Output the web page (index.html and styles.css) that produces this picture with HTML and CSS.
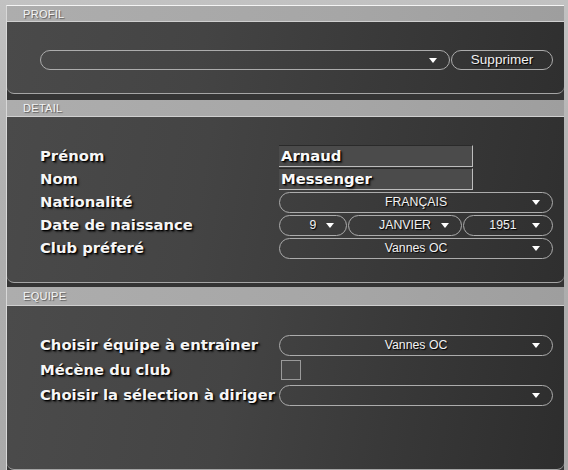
FILE: index.html
```html
<!DOCTYPE html>
<html lang="fr">
<head>
    <meta charset="UTF-8">
    <meta name="viewport" content="width=device-width, initial-scale=1.0">
    <title>Profil</title>
    <link rel="stylesheet" href="styles.css">
</head>
<body>
    <div class="screen">
        <!-- Profil -->
        <div class="section section-profil">
            <div class="section-title">PROFIL</div>
            <div class="section-body">
                <div class="profil-row">
                    <div class="select select-profil"><span class="value"></span><span class="arrow"></span></div>
                    <div class="pill-button">Supprimer</div>
                </div>
            </div>
        </div>

        <!-- Detail -->
        <div class="section section-detail">
            <div class="section-title">DETAIL</div>
            <div class="section-body">
                <div class="form-grid">
                    <div class="label">Prénom</div>
                    <div class="field"><div class="text-box">Arnaud</div></div>

                    <div class="label">Nom</div>
                    <div class="field"><div class="text-box">Messenger</div></div>

                    <div class="label">Nationalité</div>
                    <div class="field"><div class="select"><span class="value">FRANÇAIS</span><span class="arrow"></span></div></div>

                    <div class="label">Date de naissance</div>
                    <div class="field date-field">
                        <div class="select select-day"><span class="value">9</span><span class="arrow"></span></div>
                        <div class="select select-month"><span class="value">JANVIER</span><span class="arrow"></span></div>
                        <div class="select select-year"><span class="value">1951</span><span class="arrow"></span></div>
                    </div>

                    <div class="label">Club préferé</div>
                    <div class="field"><div class="select"><span class="value">Vannes OC</span><span class="arrow"></span></div></div>
                </div>
            </div>
        </div>

        <!-- Equipe -->
        <div class="section section-equipe">
            <div class="section-title">EQUIPE</div>
            <div class="section-body">
                <div class="form-grid equipe-grid">
                    <div class="label">Choisir équipe à entraîner</div>
                    <div class="field"><div class="select"><span class="value">Vannes OC</span><span class="arrow"></span></div></div>

                    <div class="label">Mécène du club</div>
                    <div class="field"><div class="checkbox"></div></div>

                    <div class="label">Choisir la sélection à diriger</div>
                    <div class="field"><div class="select"><span class="value"></span><span class="arrow"></span></div></div>
                </div>
            </div>
        </div>
    </div>
</body>
</html>
```

FILE: styles.css
```css
/* Global */
html, body {
    margin: 0;
    padding: 0;
}

body {
    width: 568px;
    height: 470px;
    overflow: hidden;
    padding: 5px 5px 0 6px;
    box-sizing: border-box;
    background: linear-gradient(180deg, #c2c2c2, #b0b0b0 40%, #a9a9a9); /* light textured frame */
    font-family: 'Liberation Sans', Arial, sans-serif;
    color: #f2f2f2;
}

.screen {
    width: 557px;
    height: 465px;
    border-top: 1px solid #f4f4f4;
    border-left: 1px solid #d8d8d8;
    background: #343434;
    display: flex;
    flex-direction: column;
}

/* Sections */
.section-title {
    background: linear-gradient(90deg, #adadad, #a6a6a6 60%, #9e9e9e);
    border-bottom: 1px solid #cfcfcf;
    padding-left: 16px;
    font-size: 11px;
    letter-spacing: 0.3px;
    color: #f4f4f4;
    text-shadow: 1px 1px 1px #5a5a5a;
    display: flex;
    align-items: center;
    box-sizing: border-box;
}

.section-body {
    background: linear-gradient(100deg, #4a4a4a 0%, #444 35%, #3a3a3a 65%, #2f2f2f 100%);
    border-bottom: 1px solid #a5a5a5;
    border-radius: 0 0 7px 7px;
    box-sizing: border-box;
    padding: 28px 0 0 33px;
}

.section-profil .section-title { height: 16px; }
.section-profil .section-body { height: 72px; }
.section-profil { margin-bottom: 6px; }

.section-detail .section-title { height: 17px; }
.section-detail .section-body { height: 166px; }
.section-detail { margin-bottom: 4px; }

.section-equipe .section-title { height: 19px; }
.section-equipe .section-body {
    height: 164px;
    background: linear-gradient(100deg, #4b4b4b 0%, #444 40%, #383838 70%, #2d2d2d 100%);
}

/* Profil row */
.profil-row {
    display: flex;
    gap: 1px;
    height: 20px;
}

.select-profil {
    width: 410px;
}

.pill-button {
    width: 102px;
    box-sizing: border-box;
    border: 1.5px solid #ababab;
    border-radius: 11px;
    font-size: 13.5px;
    text-align: center;
    line-height: 17px;
    text-shadow: 1px 1px 1px #000;
}

/* Form grid */
.form-grid {
    display: grid;
    grid-template-columns: 239px 274px;
    grid-auto-rows: 22px;
    row-gap: 1px;
}

.equipe-grid {
    row-gap: 3px;
}

.label {
    font-family: 'DejaVu Sans', Verdana, sans-serif;
    font-weight: bold;
    font-size: 14.8px;
    line-height: 22px;
    white-space: nowrap;
    color: #f6f6f6;
    text-shadow: 1px 1px 1px #000, 2px 2px 2px rgba(0, 0, 0, 0.6);
}

.field {
    display: flex;
    align-items: center;
}

.text-box {
    width: 194px;
    height: 22px;
    box-sizing: border-box;
    background: #4b4b4b;
    border-top: 1px solid #2a2a2a;
    border-right: 1px solid #bdbdbd;
    border-bottom: 1px solid #bdbdbd;
    padding-left: 2px;
    font-family: 'DejaVu Sans', Verdana, sans-serif;
    font-weight: bold;
    font-size: 14.8px;
    line-height: 19px;
    color: #fafafa;
    text-shadow: 1px 1px 1px #000, 2px 2px 2px rgba(0, 0, 0, 0.6);
}

/* Dropdowns */
.select {
    flex: 1;
    height: 21px;
    box-sizing: border-box;
    border: 1.5px solid #acacac;
    border-radius: 11px;
    display: flex;
    align-items: center;
    padding: 0 12px 0 28px;
    font-size: 12.3px;
    color: #f2f2f2;
    text-shadow: 1px 1px 1px #000;
}

.select-profil {
    flex: none;
    height: 20px;
}

.select .value {
    flex: 1;
    text-align: center;
    white-space: nowrap;
}

.select .arrow {
    width: 0;
    height: 0;
    margin-left: 8px;
    border-left: 4px solid transparent;
    border-right: 4px solid transparent;
    border-top: 5px solid #ffffff;
}

.date-field {
    gap: 1px;
}

.select-day { flex: none; width: 68px; }
.select-month { flex: none; width: 114px; }
.select-year { flex: none; width: 90px; padding-left: 18px; }

.checkbox {
    width: 20px;
    height: 20px;
    margin-left: 2px;
    box-sizing: border-box;
    border: 1px solid #9a9a9a;
    background: #474747;
}
```
